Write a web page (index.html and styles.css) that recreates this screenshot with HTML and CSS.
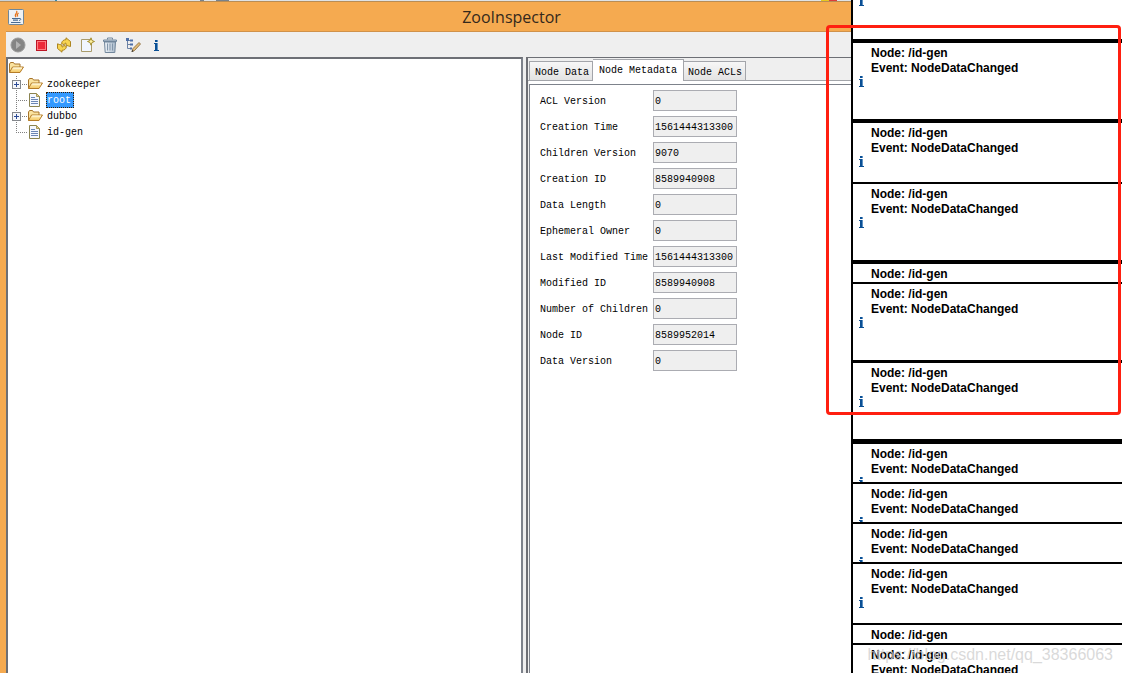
FILE: index.html
```html
<!DOCTYPE html>
<html lang="en">
<head>
<meta charset="utf-8">
<title>ZooInspector</title>
<link rel="stylesheet" href="styles.css">
</head>
<body>
<svg class="defs" aria-hidden="true">
  <defs>
    <linearGradient id="gold" x1="0" y1="0" x2="0" y2="1"><stop offset="0" stop-color="#fff3c4"/><stop offset="1" stop-color="#f3c55e"/></linearGradient>
    <linearGradient id="steel" x1="0" y1="0" x2="1" y2="0"><stop offset="0" stop-color="#eef3f8"/><stop offset="1" stop-color="#a9b9ca"/></linearGradient>
  </defs>
  <symbol id="info" viewBox="0 0 16 16">
    <path d="M7 3h3v2H7zM6 6h4v7h1v1H6v-1h1V7H6z" fill="#0a4f94"/>
    <path d="M9.500 3v2M9.500 6v7" stroke="#5f93c4"/>
  </symbol>
  <symbol id="folder" viewBox="0 0 16 16">
    <path d="M1.500 12.500V4l1-1.500h3l1 1.500h5.500v3" fill="#fae3a0" stroke="#a8742a"/>
    <path d="M1.500 12.500L4.500 7h11l-3.500 5.500z" fill="url(#gold)" stroke="#b57c28"/>
    <path d="M5.200 8h8.800" stroke="#fffbe6"/>
  </symbol>
  <symbol id="file" viewBox="0 0 16 16">
    <path d="M2.500 1.500h7l3 3v10h-10z" fill="#f4f8ff" stroke="#8a8350"/>
    <path d="M9.500 1.500v3h3z" fill="#e4d39a" stroke="#a8985a"/>
    <path d="M4 5.500h4M4 7.500h7M4 9.500h7M4 11.500h7" stroke="#6b86b5"/>
  </symbol>
</svg>
<div class="desktop">
  <main class="window">
    <div class="backdrop"></div>
    <header class="titlebar">
      <svg class="icon" viewBox="0 0 16 16"><rect x=".5" y=".5" width="15" height="15" rx="1" fill="#eef2f5" stroke="#6f8799"/><path d="M8.500 2c2 2-3 3-.5 6M10.500 4c-2 1.500-1.500 2 -.8 3.500" fill="none" stroke="#e5731b" stroke-width="1.300"/><path d="M4 9.500h7M5 11.200h5M3 13.500h9.500" stroke="#496c91" stroke-width="1.200"/><path d="M11 9.500c2.500-.5 2.500 1.500 0 2" fill="none" stroke="#496c91"/></svg>
      <h1 class="title">ZooInspector</h1>
    </header>
    <nav class="toolbar">
      <button class="tool" aria-label="Connect"><svg class="icon" viewBox="0 0 16 16"><circle cx="8" cy="8" r="7" fill="#858585" stroke="#9b9b9b"/><path d="M6 4l5 4-5 4z" fill="#b4b4b4"/></svg></button>
      <button class="tool" aria-label="Disconnect"><svg class="icon" viewBox="0 0 16 16"><rect x="3.500" y="3.500" width="10" height="10" fill="#ed2b3a" stroke="#bd1525"/><rect x="4.500" y="4.500" width="8" height="8" fill="none" stroke="#ff7b80"/></svg></button>
      <button class="tool" aria-label="Refresh"><svg class="icon" viewBox="0 0 16 16"><path d="M5.500 6.500C6 3.800 7.800 2.600 10 2.700V.8l4.500 3.700V9.500L12.500 9l-2.500-.8V6.200C8.800 6 8.500 6.800 8.300 7.700z" fill="#f7d452" stroke="#a57b12" stroke-width=".9"/><path d="M10.500 9.500C10 12.200 8.200 13.400 6 13.300v1.900L1.500 11.500V6.800L3.500 7.500l2.500.5v1.900c1.200.1 1.500-.6 1.700-1.500z" fill="#f7d452" stroke="#a57b12" stroke-width=".9"/></svg></button>
      <button class="tool" aria-label="Add node"><svg class="icon" viewBox="0 0 16 16"><path d="M2.500 2.500h10v12h-10z" fill="#f1f6ff" stroke="#a99b6b"/><path d="M12 .8l1 2.700 2.500 1-2.500 1-1 2.700-1-2.700-2.500-1 2.500-1z" fill="#fff2a0" stroke="#9c8423" stroke-width=".9"/></svg></button>
      <button class="tool" aria-label="Delete node"><svg class="icon" viewBox="0 0 16 16"><path d="M2.500 5h11l-.7 10.500H3.200z" fill="url(#steel)" stroke="#71869b"/><path d="M1.500 4.500v-1.500h13v1.500z" fill="#c7d3de" stroke="#71869b"/><path d="M5.500 2.500v-1.500h5v1.500" fill="none" stroke="#71869b"/><path d="M5.500 6.500v7M8 6.500v7M10.500 6.500v7" stroke="#8296aa"/></svg></button>
      <button class="tool" aria-label="Node viewers"><svg class="icon" viewBox="0 0 16 16"><path d="M2.500 3v8.500H6M2.500 3.500H6M2.500 7.500H6" fill="none" stroke="#6d83a6"/><path d="M1 1h3v3H1zM5 2.500h3v2H5zM5 6.500h3v2H5zM5 10.500h2v2H5z" fill="#4f70a8"/><path d="M7 14.500l1-3L14 5.500l1.500 1.500-6 6.500z" fill="#e5bf7c" stroke="#80602f" stroke-width=".8"/><path d="M6.500 15l.7-2 1.500 1.200z" fill="#333"/></svg></button>
      <button class="tool" aria-label="About"><svg class="icon"><use href="#info"/></svg></button>
    </nav>
    <div class="split">
      <section class="tree">
        <div class="root"><svg class="icon"><use href="#folder"/></svg></div>
        <ul class="nodes">
          <li class="node"><button class="expander" aria-label="Expand zookeeper"></button><svg class="icon"><use href="#folder"/></svg><span class="name">zookeeper</span></li>
          <li class="node"><svg class="icon"><use href="#file"/></svg><span class="name selected">root</span></li>
          <li class="node"><button class="expander" aria-label="Expand dubbo"></button><svg class="icon"><use href="#folder"/></svg><span class="name">dubbo</span></li>
          <li class="node"><svg class="icon"><use href="#file"/></svg><span class="name">id-gen</span></li>
        </ul>
      </section>
      <section class="details">
        <div class="tabs">
          <button class="tab">Node Data</button><button class="tab current">Node Metadata</button><button class="tab">Node ACLs</button>
        </div>
        <form class="meta">
          <label for="f1">ACL Version</label><input id="f1" value="0" readonly>
          <label for="f2">Creation Time</label><input id="f2" value="1561444313300" readonly>
          <label for="f3">Children Version</label><input id="f3" value="9070" readonly>
          <label for="f4">Creation ID</label><input id="f4" value="8589940908" readonly>
          <label for="f5">Data Length</label><input id="f5" value="0" readonly>
          <label for="f6">Ephemeral Owner</label><input id="f6" value="0" readonly>
          <label for="f7">Last Modified Time</label><input id="f7" value="1561444313300" readonly>
          <label for="f8">Modified ID</label><input id="f8" value="8589940908" readonly>
          <label for="f9">Number of Children</label><input id="f9" value="0" readonly>
          <label for="f10">Node ID</label><input id="f10" value="8589952014" readonly>
          <label for="f11">Data Version</label><input id="f11" value="0" readonly>
        </form>
      </section>
    </div>
  </main>
  <aside class="events">
    <div class="event leading"><svg class="icon"><use href="#info"/></svg></div>
    <div class="event tall heavy"><svg class="icon"><use href="#info"/></svg><p>Node: /id-gen<br>Event: NodeDataChanged</p></div>
    <div class="event medium heavy"><svg class="icon"><use href="#info"/></svg><p>Node: /id-gen<br>Event: NodeDataChanged</p></div>
    <div class="event tall"><svg class="icon"><use href="#info"/></svg><p>Node: /id-gen<br>Event: NodeDataChanged</p></div>
    <div class="event line heavy"><p>Node: /id-gen</p></div>
    <div class="event tall"><svg class="icon"><use href="#info"/></svg><p>Node: /id-gen<br>Event: NodeDataChanged</p></div>
    <div class="event tall thick"><svg class="icon"><use href="#info"/></svg><p>Node: /id-gen<br>Event: NodeDataChanged</p></div>
    <div class="event short bold"><svg class="icon"><use href="#info"/></svg><p>Node: /id-gen<br>Event: NodeDataChanged</p></div>
    <div class="event short"><svg class="icon"><use href="#info"/></svg><p>Node: /id-gen<br>Event: NodeDataChanged</p></div>
    <div class="event short"><svg class="icon"><use href="#info"/></svg><p>Node: /id-gen<br>Event: NodeDataChanged</p></div>
    <div class="event medium"><svg class="icon"><use href="#info"/></svg><p>Node: /id-gen<br>Event: NodeDataChanged</p></div>
    <div class="event line"><p>Node: /id-gen</p></div>
    <div class="event short"><p>Node: /id-gen<br>Event: NodeDataChanged</p></div>
  </aside>
  <div class="highlight"></div>
  <div class="watermark">https://blog.csdn.net/qq_38366063</div>
</div>
</body>
</html>
```
FILE: styles.css
```css
* { box-sizing: border-box; }

body {
  margin: 0;
  background: #fff;
  color: #000;
  font: 10px/16px "Liberation Mono", monospace;
}

button, input { font: inherit; color: inherit; margin: 0; }

.defs { position: absolute; width: 0; height: 0; }
.icon { display: block; flex: none; width: 16px; height: 16px; }

.desktop {
  position: relative;
  display: grid;
  grid-template-columns: 1fr 271px;
  height: 100vh;
  overflow: hidden;
}

/* Application window */
.window {
  display: flex;
  flex-direction: column;
  min-width: 0;
  min-height: 0;
  padding-left: 6px;
  background: #f5aa50;
}

.backdrop {
  height: 2px;
  margin-left: -6px;
  border-bottom: 1px solid #b98d55;
  background: linear-gradient(90deg, #c9d3da 0 55px, #388aa8 55px 57px, #dfe3e6 57px 200px, #78828c 200px 204px, #dfe3e6 204px 216px, #78828c 216px 229px, #dfe3e6 229px 821px, #e8c81e 821px 829px, #dc3b3b 829px 837px, #dfe3e6 837px);
}

.titlebar {
  display: flex;
  align-items: center;
  height: 30px;
  padding-left: 2px;
  border-bottom: 1px solid #d0924a;
}

.title {
  flex: 1;
  margin: 0;
  padding-left: 148px;
  text-align: center;
  color: #33281c;
  font: 16px/24px "Open Sans", "Noto Sans", sans-serif;
}

.toolbar {
  display: flex;
  height: 25px;
  align-items: center;
  background: #efefef;
}

.tool {
  display: grid;
  place-items: center;
  width: 23px;
  height: 24px;
  padding: 0;
  border: 0;
  background: none;
}

.split {
  flex: 1;
  display: grid;
  grid-template-columns: 517fr 325fr;
  gap: 3px;
  min-height: 0;
  background: #efefef;
}

/* Node tree */
.tree {
  padding: 1px 0;
  border: 1px solid #7d828b;
  border-width: 2px 2px 0;
  border-top-color: #6d6f75;
  border-left-color: #6d6f75;
  background: #fff;
}

.nodes {
  margin: 0 0 0 8px;
  padding: 0;
  list-style: none;
  background: repeating-linear-gradient(#808080 0 1px, transparent 1px 2px) 0 0 / 1px 56px no-repeat;
}

.node {
  display: flex;
  align-items: center;
  height: 16px;
  background: repeating-linear-gradient(90deg, #808080 0 1px, transparent 1px 2px) 0 8px / 12px 1px no-repeat;
}

.node .icon { margin-left: 11px; }

.expander {
  width: 9px;
  height: 9px;
  margin-left: -4px;
  padding: 0;
  border: 1px solid #84878c;
  background:
    linear-gradient(#2b4a96, #2b4a96) 50% 50% / 5px 1px no-repeat,
    linear-gradient(#2b4a96, #2b4a96) 50% 50% / 1px 5px no-repeat,
    #f4f6fa;
}

.node .expander + .icon { margin-left: 6px; }

.name {
  margin-left: 3px;
  padding: 1px 1px 0 0;
  border: 1px solid transparent;
  line-height: 13px;
}

.name.selected {
  padding-right: 2px;
  border: 1px dotted #3b1d00;
  background: #3399ff;
  color: #fff;
}

/* Details pane */
.details {
  display: flex;
  flex-direction: column;
  min-width: 0;
  border-top: 1px solid #6d6f75;
  border-left: 2px solid #6d6f75;
}

.tabs {
  display: flex;
  align-items: flex-end;
  height: 23px;
  padding-left: 1px;
  border-bottom: 1px solid #a3a5aa;
}

.tab {
  height: 19px;
  padding: 3px 3px 0 4px;
  border: 1px solid #a3a5aa;
  border-bottom: 0;
  border-left: 0;
  background: linear-gradient(#f7f7f7, #e3e3e3);
}

.tab:first-child { padding-left: 5px; border-left: 1px solid #a3a5aa; }

.tab.current {
  height: 22px;
  margin-bottom: -1px;
  padding: 0 6px;
  background: #fff;
}

.meta {
  flex: 1;
  display: grid;
  grid-template-columns: 113px 84px;
  grid-auto-rows: 21px;
  align-items: center;
  align-content: start;
  row-gap: 5px;
  margin: 3px 0 0 1px;
  padding: 5px 10px;
  border-top: 1px solid #7d828b;
  border-left: 1px solid #7d828b;
  background: #fff;
  box-shadow: 0 -3px #fff;
}

.meta label { padding-top: 2px; }

.meta input {
  width: 100%;
  height: 21px;
  padding: 2px 1px 0;
  border: 1px solid #abacb2;
  border-radius: 0;
  background: #efefef;
}

/* Event notifications */
.events {
  min-height: 0;
  overflow: hidden;
  border-left: 2px solid #000;
  background: #fff;
  font: bold 12px/15px "Liberation Sans", Arial, sans-serif;
}

.event {
  display: grid;
  grid-template-columns: 16px 1fr;
  column-gap: 2px;
  align-items: start;
  box-sizing: content-box;
  overflow: hidden;
  border-top: 2px solid #000;
}

.event p { grid-column: 2; margin: 0; padding-top: 3px; }
.event .icon { margin-top: 30px; }
.event.leading { height: 39px; border-top: 0; }
.event.leading .icon { margin-top: -8px; }
.event.tall { height: 76px; }
.event.medium { height: 59px; }
.event.short { height: 38px; }
.event.line { height: 18px; }
.event.thick { border-top-width: 3px; }
.event.heavy { border-top-width: 4px; }
.event.bold { border-top-width: 5px; }

/* Annotation frame laid over both columns */
.highlight {
  position: absolute;
  top: 25px;
  right: 1px;
  width: 295px;
  height: 390px;
  border: 3px solid #ff1f10;
  border-radius: 4px;
}

.watermark {
  position: absolute;
  right: 9px;
  bottom: 8px;
  color: rgba(205, 205, 205, 0.75);
  font: 16px/20px "Liberation Sans", Arial, sans-serif;
}
```
